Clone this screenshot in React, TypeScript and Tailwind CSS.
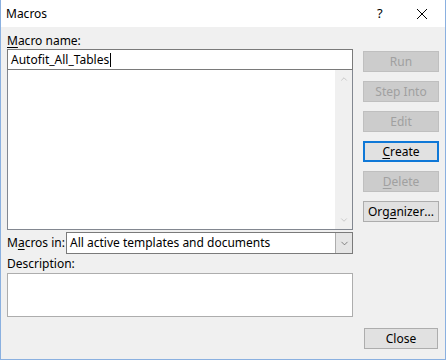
import { ChevronDown, ChevronUp } from "lucide-react";

const font = { fontFamily: '"Noto Sans", "Open Sans", sans-serif' };

function DlgButton({ label, ul, disabled, focused, }: {
    label: string;
    ul?: number;
    disabled?: boolean;
    focused?: boolean;
}) {
    const chars = label.split("");
    return (<div className={"flex h-[21px] w-[76px] items-center justify-center text-[12px] " +
            (focused
                ? "border-2 border-[#0f78d7] bg-[#e1e1e1] text-black"
                : disabled
                    ? "border border-[#bfbfbf] bg-[#cccccc] text-[#a0a0a0]"
                    : "border border-[#adadad] bg-[#e1e1e1] text-black")}>
      {chars.map((c, i) => (<span key={i} className={i === ul ? "underline underline-offset-2" : ""}>
          {c === " " ? "\u00a0" : c}
        </span>))}
    </div>);
}

export default function App() {
    return (<div className="h-[363px] w-[447px] bg-white" style={font}>
      <div className="flex h-[360px] w-[446px] flex-col border-x border-b border-[#8ab0e0] bg-[#f0f0f0]">
        {/* title bar */}
        <div className="flex h-[27px] items-center bg-white pl-[5px] text-[12px] text-black">
          <span className="flex-1">Macros</span>
          <span className="w-[22px] text-[13px]">?</span>
          <span className="flex w-[46px] justify-center">
            <svg width="12" height="12" viewBox="0 0 12 12">
              <path d="M1 1 L11 11 M11 1 L1 11" stroke="#000" strokeWidth="1"/>
            </svg>
          </span>
        </div>

        <div className="flex flex-1 flex-col px-[6px] pt-[5px] text-[12px] text-black">
          <div className="flex gap-[10px]">
            {/* left column */}
            <div className="flex w-[346px] flex-col">
              <div className="h-[17px] leading-[17px]">
                <span className="underline underline-offset-2">M</span>acro name:
              </div>
              <div className="flex h-[21px] items-center border border-[#7a7a7a] bg-white px-[3px]">
                Autofit_All_Tables<span className="ml-[1px] inline-block h-[14px] w-[1px] bg-black"/>
              </div>
              <div className="flex h-[160px] border border-[#828790] border-t-0 bg-white">
                <div className="flex-1"/>
                <div className="flex w-[17px] flex-col items-center justify-between bg-[#f0f0f0] py-[4px] text-[#c2c2c2]">
                  <ChevronUp className="h-[10px] w-[10px]" strokeWidth={2}/>
                  <ChevronDown className="h-[10px] w-[10px]" strokeWidth={2}/>
                </div>
              </div>
            </div>
            {/* buttons */}
            <div className="flex flex-col gap-[9px] pt-[19px]">
              <DlgButton label="Run" disabled/>
              <DlgButton label="Step Into" disabled/>
              <DlgButton label="Edit" disabled/>
              <DlgButton label="Create" ul={0} focused/>
              <DlgButton label="Delete" ul={0} disabled/>
              <DlgButton label="Organizer..." ul={3}/>
            </div>
          </div>

          <div className="mt-[2px] flex w-[346px] items-center">
            <span className="w-[59px]">
              M<span className="underline underline-offset-2">a</span>cros in:
            </span>
            <div className="flex h-[22px] flex-1 items-center border border-[#7a7a7a] bg-white pl-[3px]">
              <span className="flex-1">All active templates and documents</span>
              <div className="flex h-full w-[17px] items-center justify-center border-l border-[#adadad] bg-[#e5e5e5]">
                <ChevronDown className="h-[11px] w-[11px] text-[#555]" strokeWidth={1.5}/>
              </div>
            </div>
          </div>

          <div className="mt-[1px] h-[18px] leading-[18px]">Description:</div>
          <div className="h-[44px] w-[346px] border border-[#adadad] bg-white"/>

          <div className="mt-[11px] flex justify-end pr-[1px]">
            <div className="flex h-[21px] w-[74px] items-center justify-center border border-[#adadad] bg-[#e1e1e1]">
              Close
            </div>
          </div>
        </div>
      </div>
    </div>);
}
